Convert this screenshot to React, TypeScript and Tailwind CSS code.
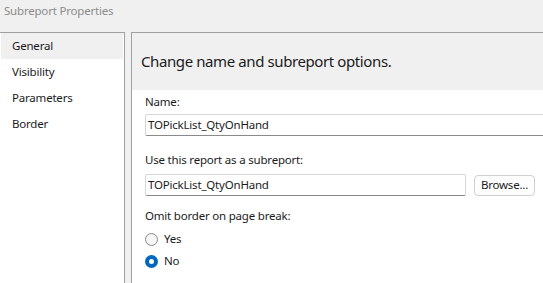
import * as React from "react";

const navItems = ["General", "Visibility", "Parameters", "Border"];

const Radio = ({ checked, label }: { checked: boolean; label: string }) => (
  <div className="flex items-center h-[22px] gap-[6px]">
    {checked ? (
      <span className="w-[13px] h-[13px] rounded-full bg-[#0067c0] flex items-center justify-center">
        <span className="w-[5px] h-[5px] rounded-full bg-white" />
      </span>
    ) : (
      <span className="w-[13px] h-[13px] rounded-full border border-[#8a8a8a] bg-[#f6f6f6]" />
    )}
    <span>{label}</span>
  </div>
);

const App = () => {
  return (
    <div
      className="w-[543px] h-[283px] overflow-hidden bg-[#f0f0f0] text-[11.5px] tracking-[-0.2px] text-[#1b1b1b] flex flex-col"
      style={{ fontFamily: '"Noto Sans", "Open Sans", sans-serif' }}
    >
      <div className="h-[32px] shrink-0 px-[4px] pt-[3px] text-[#8c8c8c] leading-[16px]">
        Subreport Properties
      </div>
      <div className="flex flex-1 min-h-0">
        <div className="w-[125px] shrink-0 bg-white border-t border-r border-[#a0a0a0] px-[1px]">
          {navItems.map((item, i) => (
            <div
              key={item}
              className={`h-[26px] flex items-center pl-[11px] ${i === 0 ? "bg-[#f0f0f0]" : ""}`}
            >
              {item}
            </div>
          ))}
        </div>
        <div className="ml-[6px] flex-1 flex flex-col border-t border-l border-[#a0a0a0] bg-white">
          <div className="h-[57px] shrink-0 bg-[#f0f0f0] flex items-center pl-[9px] text-[15px] tracking-[-0.4px] text-[#1b1b1b]">
            Change name and subreport options.
          </div>
          <div className="pl-[13px] pt-[4px] flex flex-col leading-[16px]">
            <div className="h-[16px]">Name:</div>
            <div className="mt-[4px] h-[22px] w-[420px] border border-[#d6d6d6] border-b-[#8a8a8a] rounded-[2px] flex items-center pl-[2px]">
              TOPickList_QtyOnHand
            </div>
            <div className="mt-[16px] h-[16px]">Use this report as a subreport:</div>
            <div className="mt-[6px] flex items-center gap-[8px]">
              <div className="h-[22px] w-[321px] border border-[#d6d6d6] border-b-[#8a8a8a] rounded-[2px] flex items-center pl-[2px]">
                TOPickList_QtyOnHand
              </div>
              <button className="h-[21px] w-[61px] border border-[#d0d0d0] rounded-[4px] bg-[#fdfdfd] leading-none">
                Browse...
              </button>
            </div>
            <div className="mt-[12px] h-[16px]">Omit border on page break:</div>
            <div className="mt-[4px] flex flex-col">
              <Radio checked={false} label="Yes" />
              <Radio checked={true} label="No" />
            </div>
          </div>
        </div>
      </div>
    </div>
  );
};

export default App;
